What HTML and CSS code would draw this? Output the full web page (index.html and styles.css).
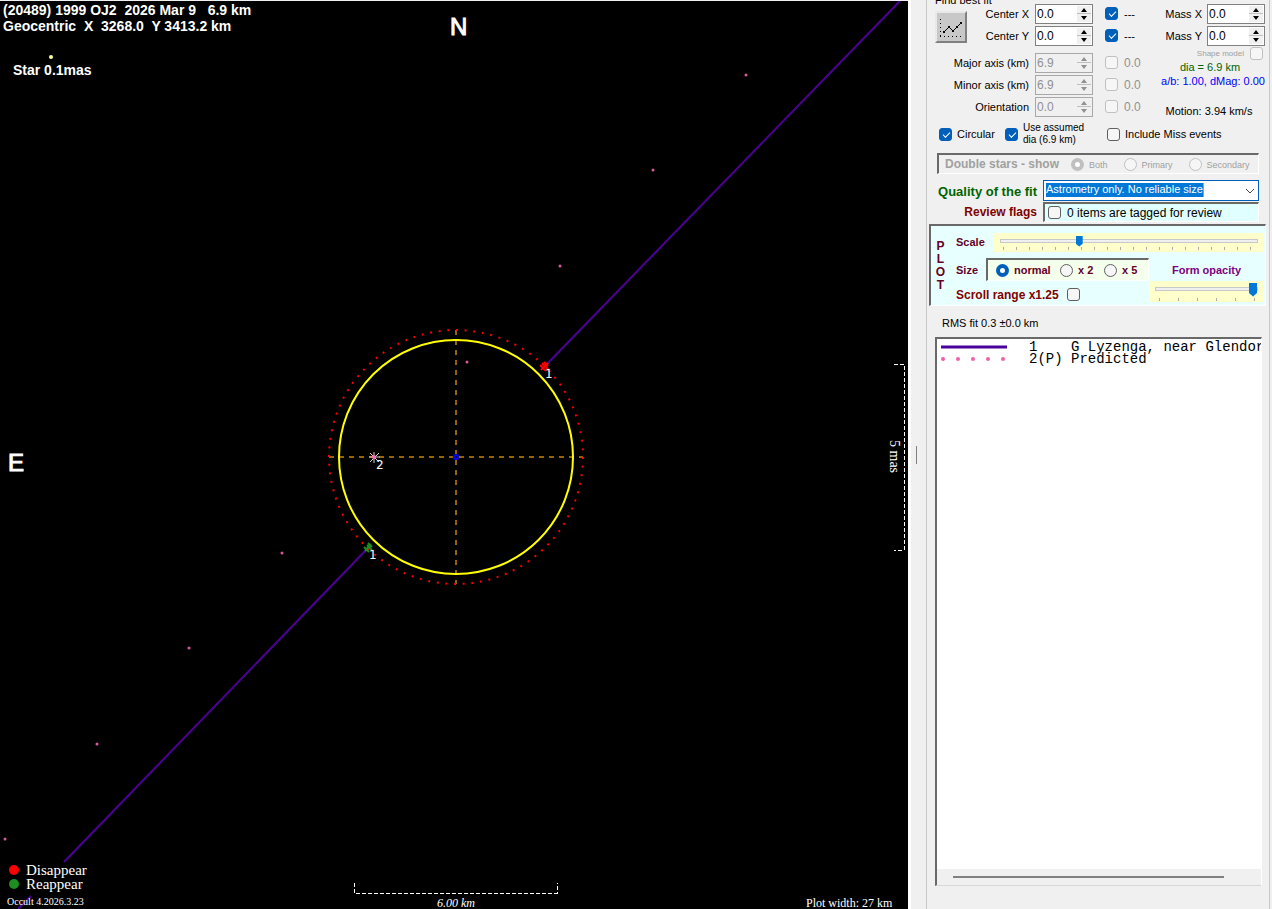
FILE: index.html
```html
<!DOCTYPE html>
<html lang="en">

<head>
    <meta charset="UTF-8">
    <meta name="viewport" content="width=device-width, initial-scale=1.0">
    <title>Occult - (20489) 1999 OJ2</title>
    <link rel="stylesheet" href="styles.css">
</head>

<body>
    <main class="plot">
        <svg class="sky" viewBox="0 1 908 908" preserveAspectRatio="xMidYMid meet">
            <!-- chord 1 -->
            <g class="chord">
                <path d="M900 1L545 366M368 548L64 862M31 896L18 909" />
            </g>

            <!-- predicted path -->
            <g class="predicted">
                <circle cx="746" cy="75" r="1.5" />
                <circle cx="653" cy="170" r="1.5" />
                <circle cx="560" cy="266" r="1.5" />
                <circle cx="467" cy="362" r="1.5" />
                <circle cx="282" cy="553" r="1.5" />
                <circle cx="189" cy="648" r="1.5" />
                <circle cx="97" cy="744" r="1.5" />
                <circle cx="5" cy="839" r="1.5" />
            </g>

            <!-- fitted profile -->
            <path class="axis" d="M456 330V584M329 457H583" />
            <circle class="limit" cx="456" cy="457" r="127" pathLength="828" />
            <circle class="profile" cx="456" cy="457" r="117" />
            <circle class="centre" cx="456" cy="457" r="2" />

            <!-- events -->
            <path class="event-d" d="M540 365L546 371M542 363L548 369M541 370L548 363M544 362L548 366" />
            <path class="event-r" d="M364 547L369 552M367 545L372 550M365 551L371 544M368 543L372 547" />
            <path class="event-p" d="M369 457H380M374 452V463M370 453L379 462M379 453L370 462" />
            <circle class="event-dot" cx="374" cy="457" r="2" />
            <text class="tag" x="545" y="378">1</text>
            <text class="tag" x="369" y="559">1</text>
            <text class="tag" x="376" y="469">2</text>

            <!-- headings -->
            <text class="title" x="3" y="15" xml:space="preserve">(20489) 1999 OJ2  2026 Mar 9   6.9 km</text>
            <text class="title" x="3" y="31" xml:space="preserve">Geocentric  X  3268.0  Y 3413.2 km</text>
            <circle class="star" cx="51" cy="57" r="2" />
            <text class="title" x="13" y="75">Star 0.1mas</text>
            <text class="compass" x="450" y="35">N</text>
            <text class="compass" x="8" y="471">E</text>

            <!-- scale bars -->
            <path class="bar" d="M354 883V893H557V883" />
            <text class="serif italic" x="437" y="907">6.00 km</text>
            <path class="bar" d="M894 364H904V550H894" />
            <text class="serif mas" transform="translate(890 440) rotate(90)">5 mas</text>

            <!-- legend -->
            <circle cx="14" cy="870" r="5" fill="#ff0000" />
            <circle cx="14" cy="884" r="5" fill="#1e8c1e" />
            <text class="serif key" x="26" y="875">Disappear</text>
            <text class="serif key" x="26" y="889">Reappear</text>
            <text class="serif tiny" x="7" y="905">Occult 4.2026.3.23</text>
            <text class="serif" x="806" y="907">Plot width: 27 km</text>
        </svg>
    </main>

    <div class="splitter"></div>

    <aside class="panel">
        <div class="caption">Find best fit</div>
        <section class="fit">
            <div class="params">
                <button class="fit-btn" aria-label="Find best fit">
                    <svg width="28" height="28" viewBox="0 0 28 28">
                        <path d="M3.500 6V24M3 23.500H26" fill="none" stroke="#000" stroke-dasharray="1 3" />
                        <path d="M7 19L12 14L16 18L24 10" fill="none" stroke="#000" />
                        <path d="M6 18h2v2h-2zM11 13h2v2h-2zM15 17h2v2h-2zM19 13h2v2h-2zM23 9h2v2h-2z" />
                    </svg>
                </button>
                <label for="cx">Center X</label>
                <div class="spin"><input type="text" id="cx" value="0.0"><button class="up" aria-label="Up"></button><button class="down" aria-label="Down"></button></div>
                <input type="checkbox" id="fx" checked><label class="val" for="fx">---</label>

                <label for="cy">Center Y</label>
                <div class="spin"><input type="text" id="cy" value="0.0"><button class="up" aria-label="Up"></button><button class="down" aria-label="Down"></button></div>
                <input type="checkbox" id="fy" checked><label class="val" for="fy">---</label>

                <label class="wide" for="major">Major axis (km)</label>
                <div class="spin"><input type="text" id="major" value="6.9" disabled><button class="up" aria-label="Up" disabled></button><button class="down" aria-label="Down" disabled></button></div>
                <input type="checkbox" id="fmaj" disabled><label class="val off" for="fmaj">0.0</label>

                <label class="wide" for="minor">Minor axis (km)</label>
                <div class="spin"><input type="text" id="minor" value="6.9" disabled><button class="up" aria-label="Up" disabled></button><button class="down" aria-label="Down" disabled></button></div>
                <input type="checkbox" id="fmin" disabled><label class="val off" for="fmin">0.0</label>

                <label class="wide" for="orient">Orientation</label>
                <div class="spin"><input type="text" id="orient" value="0.0" disabled><button class="up" aria-label="Up" disabled></button><button class="down" aria-label="Down" disabled></button></div>
                <input type="checkbox" id="fori" disabled><label class="val off" for="fori">0.0</label>
            </div>

            <div class="mass">
                <div class="mass-row">
                    <label for="mx">Mass X</label>
                    <div class="spin"><input type="text" id="mx" value="0.0"><button class="up" aria-label="Up"></button><button class="down" aria-label="Down"></button></div>
                </div>
                <div class="mass-row">
                    <label for="my">Mass Y</label>
                    <div class="spin"><input type="text" id="my" value="0.0"><button class="up" aria-label="Up"></button><button class="down" aria-label="Down"></button></div>
                </div>
                <div class="shape"><label for="shape">Shape model</label><input type="checkbox" id="shape" disabled></div>
                <div class="dia">dia = 6.9 km</div>
                <div class="ab">a/b: 1.00, dMag: 0.00</div>
                <div class="motion">Motion: 3.94 km/s</div>
            </div>
        </section>

        <section class="options">
            <input type="checkbox" id="circ" checked><label class="circ" for="circ">Circular</label>
            <input type="checkbox" id="assumed" checked><label class="assumed" for="assumed">Use assumed<br>dia (6.9 km)</label>
            <input type="checkbox" id="miss"><label for="miss">Include Miss events</label>
        </section>

        <section class="double sunken">
            <b>Double stars - show</b>
            <input type="radio" name="dbl" id="both" checked disabled><label for="both">Both</label>
            <input type="radio" name="dbl" id="prim" disabled><label for="prim">Primary</label>
            <input type="radio" name="dbl" id="sec" disabled><label for="sec">Secondary</label>
        </section>

        <section class="quality">
            <label class="green" for="quality">Quality of the fit</label>
            <div class="combo">
                <select id="quality">
                    <option>Astrometry only. No reliable size</option>
                </select>
                <svg width="10" height="6" viewBox="0 0 10 6"><path d="M1 1L5 5L9 1" fill="none" stroke="#444" /></svg>
            </div>
            <span class="maroon">Review flags</span>
            <div class="review sunken">
                <input type="checkbox" id="review"><label for="review">0 items are tagged for review</label>
            </div>
        </section>

        <section class="plot-box sunken">
            <div class="plot-word"><span>P</span><span>L</span><span>O</span><span>T</span></div>
            <div class="plot-rows">
                <div class="row scale-row">
                    <label for="scale">Scale</label>
                    <div class="slider scale"><input type="range" id="scale" min="0" max="100" value="30"></div>
                </div>
                <div class="lower">
                    <div class="lower-left">
                        <div class="row">
                            <span class="size-label">Size</span>
                            <div class="sizes sunken">
                                <input type="radio" name="size" id="s1" checked><label for="s1" class="normal">normal</label>
                                <input type="radio" name="size" id="s2"><label for="s2">x 2</label>
                                <input type="radio" name="size" id="s5"><label for="s5">x 5</label>
                            </div>
                        </div>
                        <div class="row scroll-row">
                            <label for="range">Scroll range x1.25</label><input type="checkbox" id="range">
                        </div>
                    </div>
                    <div class="opacity">
                        <label for="opacity">Form opacity</label>
                        <div class="slider opac"><input type="range" id="opacity" min="0" max="100" value="100"></div>
                    </div>
                </div>
            </div>
        </section>

        <div class="rms">RMS fit 0.3 ±0.0 km</div>

        <section class="list sunken">
            <ul>
                <li>
                    <svg width="66" height="12" viewBox="0 0 66 12"><path d="M0 6H66" stroke="#4b00a0" stroke-width="3" /></svg>
                    <span class="num">1</span><span>G Lyzenga, near Glendor</span>
                </li>
                <li>
                    <svg width="66" height="12" viewBox="0 0 66 12" fill="#f060a8">
                        <circle cx="2" cy="6" r="2" /><circle cx="17" cy="6" r="2" /><circle cx="32" cy="6" r="2" /><circle cx="47" cy="6" r="2" /><circle cx="62" cy="6" r="2" />
                    </svg>
                    <span class="num">2(P)</span><span>Predicted</span>
                </li>
            </ul>
            <div class="hscroll"><div class="thumb"></div></div>
        </section>
    </aside>
</body>

</html>
```

FILE: styles.css
```css
* {
    box-sizing: border-box;
}

body {
    margin: 0;
    height: 100vh;
    display: flex;
    overflow: hidden;
    background-color: #f0f0f0;
    font-family: "Liberation Sans", Arial, sans-serif;
    font-size: 11px;
    line-height: 12px;
    color: #000;
}

/* ---- plot ---- */
.plot {
    flex: 1;
    min-width: 0;
    background-color: #000;
    border-top: 1px solid #f0f0f0;
}

.sky {
    display: block;
    width: 100%;
    height: 100%;
}

.sky text {
    fill: #fff;
}

.chord path {
    fill: none;
    stroke: #4b0096;
    stroke-width: 2;
}

.predicted circle {
    fill: #d8589c;
}

.axis {
    stroke: #966400;
    stroke-width: 2;
    stroke-dasharray: 5 5;
}

.limit {
    fill: none;
    stroke: #ff0000;
    stroke-width: 2;
    stroke-dasharray: 2 7;
}

.profile {
    fill: none;
    stroke: #ffff00;
    stroke-width: 2;
}

.centre {
    stroke: #0000ff;
    stroke-width: 2;
}

.event-d {
    stroke: #ff0000;
    stroke-width: 2;
}

.event-r {
    stroke: #1e8c1e;
    stroke-width: 2;
}

.event-p {
    stroke: #d0d0d0;
}

.event-dot {
    fill: #ff69b4;
}

.star {
    fill: #ffff96;
}

.bar {
    fill: none;
    stroke: #fff;
    stroke-dasharray: 4 2;
    shape-rendering: crispEdges;
}

.tag {
    font: 12px "DejaVu Sans", sans-serif;
}

.title {
    font: bold 14px "Liberation Sans", sans-serif;
    white-space: pre;
}

.compass {
    font: 24px "Liberation Sans", sans-serif;
    stroke: #fff;
    stroke-width: 1;
}

.serif {
    font: 12px "Liberation Serif", serif;
}

.italic {
    font-style: italic;
}

.mas {
    font-size: 14px;
}

.key {
    font-size: 15px;
}

.tiny {
    font-size: 10px;
}

/* ---- panel ---- */
.splitter {
    width: 18px;
    border-left: 3px solid #fff;
    background: linear-gradient(#808080, #808080) 5px 50% / 1px 18px no-repeat;
}

.panel {
    width: 344px;
    margin-right: 2px;
    padding: 0 3px 23px 2px;
    border-left: 1px solid #c8c8c8;
    border-right: 1px solid #c8c8c8;
    display: flex;
    flex-direction: column;
}

.caption {
    height: 12px;
    margin: -6px 0 -3px 6px;
}

input,
select,
button {
    margin: 0;
    padding: 0;
    font: inherit;
    color: inherit;
}

input[type="checkbox"],
input[type="radio"] {
    appearance: none;
    flex: none;
    width: 13px;
    height: 13px;
    border: 1px solid #606060;
    border-radius: 3px;
    background-color: #f6f6f6;
}

input[type="checkbox"]:checked {
    border-color: #005fb8;
    background-color: #005fb8;
}

input[type="checkbox"]:checked::after {
    content: "";
    display: block;
    width: 6px;
    height: 3px;
    margin: 3px 0 0 3px;
    border-left: 1px solid #fff;
    border-bottom: 1px solid #fff;
    transform: rotate(-45deg);
}

input[type="radio"] {
    border-radius: 50%;
}

input[type="radio"]:checked {
    border: 4px solid #005fb8;
    background-color: #fff;
}

input[type="checkbox"]:disabled,
input[type="radio"]:disabled {
    border-color: #c0c0c0;
}

.sunken {
    border-top: 2px solid #696969;
    border-left: 2px solid #696969;
    border-right: 1px solid #fff;
    border-bottom: 1px solid #fff;
}

.fit {
    display: flex;
    justify-content: space-between;
    padding: 0 1px 0 6px;
}

.params {
    display: grid;
    grid-template-columns: 32px 56px 58px 19px 20px;
    grid-template-rows: 22px 27px 22px 22px 22px;
    column-gap: 6px;
    align-items: start;
}

.params label {
    line-height: 22px;
    text-align: right;
    white-space: nowrap;
}

.params label.wide {
    grid-column: 1 / 3;
}

.params label.val {
    text-align: left;
}

.params label.off {
    color: #909090;
    font-size: 12px;
}

.params > input {
    margin-top: 4px;
    justify-self: end;
}

.fit-btn {
    grid-row: 1 / 3;
    width: 32px;
    height: 32px;
    margin-top: 8px;
    border: 2px solid;
    border-color: #e8e8e8 #808080 #808080 #e8e8e8;
    background-color: #c8c8c8;
}

.fit-btn svg {
    display: block;
}

.spin {
    display: grid;
    grid-template-columns: 1fr 14px;
    grid-template-rows: 8px 8px;
    width: 58px;
    height: 20px;
    margin-top: 1px;
    padding: 1px;
    border: 1px solid #808080;
    background-color: #fff;
}

.spin input {
    grid-row: 1 / 3;
    width: 100%;
    height: 15px;
    border: 0;
    background: none;
    font-size: 12px;
}

.spin button {
    border: 0;
    background-color: #f0f0f0;
    display: flex;
    align-items: center;
    justify-content: center;
}

.spin button::before {
    content: "";
    border: 3px solid transparent;
}

.spin .up::before {
    border-top: 0;
    border-bottom: 4px solid currentColor;
}

.spin .down::before {
    border-bottom: 0;
    border-top: 4px solid currentColor;
}

.spin .up {
    border-bottom: 1px solid #c0c0c0;
}

.spin:has(:disabled) {
    background-color: #f0f0f0;
    border-color: #a8a8a8;
    color: #909090;
}

.mass {
    width: 104px;
    text-align: center;
}

.mass-row {
    display: flex;
    justify-content: flex-end;
    gap: 5px;
    height: 22px;
    line-height: 22px;
}

.shape {
    display: flex;
    justify-content: flex-end;
    align-items: center;
    gap: 6px;
    height: 13px;
    padding-right: 2px;
    color: #a0a0a0;
    font-size: 8px;
}

.dia {
    padding-right: 6px;
    line-height: 14px;
    color: #006400;
}

.ab {
    line-height: 14px;
    color: #0000ff;
    white-space: nowrap;
}

.motion {
    margin-top: 17px;
    padding-right: 8px;
    white-space: nowrap;
}

.options {
    display: flex;
    align-items: center;
    height: 26px;
    margin-top: 3px;
    padding-left: 10px;
}

.options label {
    margin-left: 5px;
    white-space: nowrap;
}

.options .circ {
    width: 48px;
}

.options .assumed {
    width: 84px;
    font-size: 10px;
}

.double {
    display: flex;
    align-items: center;
    height: 21px;
    margin: 6px 7px 0 8px;
    padding-left: 6px;
    color: #a0a0a0;
    font-size: 9px;
    white-space: nowrap;
}

.double b {
    flex: none;
    width: 126px;
    font-size: 12px;
}

.double label {
    margin: 2px 16px 0 5px;
}

.double label:last-child {
    margin-right: 0;
}

.quality {
    display: grid;
    grid-template-columns: 1fr 216px;
    grid-template-rows: 22px 20px;
    row-gap: 1px;
    column-gap: 6px;
    align-items: center;
    margin: 5px 7px 0 0;
    text-align: right;
    font-weight: bold;
    font-size: 12px;
    white-space: nowrap;
}

.green {
    padding-top: 4px;
    color: #006400;
    font-size: 13px;
}

.maroon {
    color: #800000;
}

.combo {
    position: relative;
}

.combo select {
    appearance: none;
    display: block;
    width: 100%;
    height: 21px;
    padding-left: 2px;
    border: 1px solid #005fb8;
    border-radius: 0;
    font-size: 11px;
    font-weight: normal;
    color: #fff;
    background: linear-gradient(90deg, #0078d7 157px, #ff8728 157px) 2px 2px / 158px 14px no-repeat #fff;
    padding-bottom: 2px;
}

.combo svg {
    position: absolute;
    right: 4px;
    top: 8px;
}

.review {
    display: flex;
    align-items: center;
    gap: 6px;
    height: 20px;
    padding-left: 3px;
    background-color: #e0ffff;
    font-weight: normal;
}

/* ---- plot settings ---- */
.plot-box {
    display: flex;
    height: 82px;
    margin-top: 2px;
    background-color: #e8ffff;
    color: #640028;
    font-weight: bold;
}

.plot-word {
    display: flex;
    flex-direction: column;
    width: 20px;
    padding-top: 14px;
    line-height: 13px;
    text-align: center;
    font-size: 12px;
}

.plot-rows {
    flex: 1;
    padding: 7px 1px 0 6px;
}

.row {
    display: flex;
    align-items: center;
    white-space: nowrap;
}

.scale-row {
    justify-content: space-between;
    height: 18px;
}

.slider {
    background-color: #ffffcc;
    padding: 3px 6px;
}

.slider input {
    appearance: none;
    display: block;
    width: 100%;
    background-color: transparent;
}

.slider input::-webkit-slider-runnable-track {
    height: 4px;
    border: 1px solid #c8c8c8;
    background-color: #f0f0f0;
}

.slider input::-webkit-slider-thumb {
    appearance: none;
    width: 7px;
    height: 11px;
    margin-top: -4px;
    background-color: #0078d7;
    clip-path: polygon(0 0, 100% 0, 100% 75%, 50% 100%, 0 75%);
}

.scale {
    width: 270px;
    height: 19px;
}

.scale input {
    height: 14px;
    padding-bottom: 4px;
    background: repeating-linear-gradient(90deg, #b8a8a8 0 1px, transparent 1px 13px) 3px 11px / 254px 3px no-repeat;
}

.lower {
    display: flex;
    justify-content: space-between;
}

.lower-left {
    padding-top: 7px;
}

.size-label {
    width: 30px;
}

.sizes {
    display: flex;
    align-items: center;
    width: 163px;
    height: 23px;
    padding-left: 8px;
    background-color: #f4ffec;
}

.sizes label {
    width: 26px;
    margin-left: 5px;
}

.sizes .normal {
    width: 46px;
}

.scroll-row {
    gap: 8px;
    margin-top: 7px;
    color: #800000;
    font-size: 12px;
}

.opacity {
    width: 115px;
    padding-top: 13px;
    text-align: center;
    color: #800080;
}

.opac {
    height: 21px;
    margin-top: 5px;
}

.opac input {
    height: 17px;
    padding-bottom: 8px;
    background: repeating-linear-gradient(90deg, #b8a8a8 0 1px, transparent 1px 19px) 4px 14px / 96px 3px no-repeat;
}

.opac input::-webkit-slider-thumb {
    width: 8px;
    height: 14px;
    margin-top: -5px;
}

.rms {
    margin: 11px 0 8px 13px;
}

.list {
    flex: 1;
    display: flex;
    flex-direction: column;
    width: 327px;
    margin-left: 6px;
    background-color: #fff;
    border-bottom-color: #d8d8d8;
    overflow: hidden;
}

.list ul {
    flex: 1;
    margin: 0;
    padding: 2px 0 0 4px;
    list-style: none;
    font-family: "Liberation Mono", monospace;
    font-size: 14px;
    line-height: 12px;
}

.list li {
    display: flex;
    height: 12px;
    white-space: nowrap;
}

.list svg {
    flex: none;
    margin-right: 22px;
}

.num {
    flex: none;
    width: 42px;
}

.hscroll {
    height: 16px;
    padding: 7px 37px 0 16px;
    background-color: #f0f0f0;
}

.thumb {
    height: 2px;
    background-color: #808080;
}
```
